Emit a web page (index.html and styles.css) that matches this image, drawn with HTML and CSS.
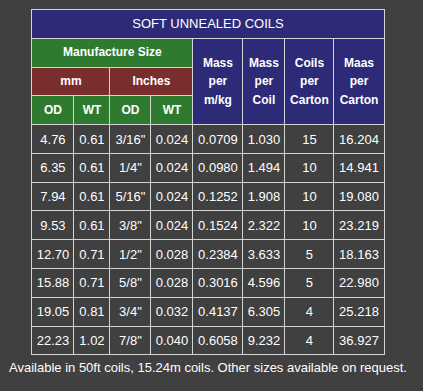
FILE: index.html
```html
<!DOCTYPE html>
<html>
<head>
<meta charset="utf-8">
<link rel="stylesheet" href="styles.css">
</head>
<body>
<div class="wrap">
<table class="coils">
<colgroup>
<col class="c42"><col class="c36"><col class="c41"><col class="c42"><col class="c50"><col class="c42"><col class="c49"><col class="c50">
</colgroup>
<thead>
<tr><th colspan="8" class="title">SOFT UNNEALED COILS</th></tr>
<tr>
<th colspan="4" class="green">Manufacture Size</th>
<th rowspan="3" class="navy"><div class="ml">Mass<br>per<br>m/kg</div></th>
<th rowspan="3" class="navy"><div class="ml">Mass<br>per<br>Coil</div></th>
<th rowspan="3" class="navy"><div class="ml">Coils<br>per<br>Carton</div></th>
<th rowspan="3" class="navy"><div class="ml">Maas<br>per<br>Carton</div></th>
</tr>
<tr><th colspan="2" class="red">mm</th><th colspan="2" class="red">Inches</th></tr>
<tr><th class="green">OD</th><th class="green">WT</th><th class="green">OD</th><th class="green">WT</th></tr>
</thead>
<tbody>
<tr><td>4.76</td><td>0.61</td><td>3/16"</td><td>0.024</td><td>0.0709</td><td>1.030</td><td>15</td><td>16.204</td></tr>
<tr><td>6.35</td><td>0.61</td><td>1/4"</td><td>0.024</td><td>0.0980</td><td>1.494</td><td>10</td><td>14.941</td></tr>
<tr><td>7.94</td><td>0.61</td><td>5/16"</td><td>0.024</td><td>0.1252</td><td>1.908</td><td>10</td><td>19.080</td></tr>
<tr><td>9.53</td><td>0.61</td><td>3/8"</td><td>0.024</td><td>0.1524</td><td>2.322</td><td>10</td><td>23.219</td></tr>
<tr><td>12.70</td><td>0.71</td><td>1/2"</td><td>0.028</td><td>0.2384</td><td>3.633</td><td>5</td><td>18.163</td></tr>
<tr><td>15.88</td><td>0.71</td><td>5/8"</td><td>0.028</td><td>0.3016</td><td>4.596</td><td>5</td><td>22.980</td></tr>
<tr><td>19.05</td><td>0.81</td><td>3/4"</td><td>0.032</td><td>0.4137</td><td>6.305</td><td>4</td><td>25.218</td></tr>
<tr><td>22.23</td><td>1.02</td><td>7/8"</td><td>0.040</td><td>0.6058</td><td>9.232</td><td>4</td><td>36.927</td></tr>
</tbody>
</table>
<p class="note">Available in 50ft coils, 15.24m coils. Other sizes available on request.</p>
</div>
</body>
</html>
```

FILE: styles.css
```css
html, body {
  background: #404040;
}
body {
  margin: 8px;
  font-family: "Liberation Sans", Arial, sans-serif;
  color: #ffffff;
}
.wrap {
  width: 400px;
  padding-top: 1px;
  display: flex;
  flex-direction: column;
  align-items: center;
}
.coils {
  border-collapse: collapse;
  table-layout: fixed;
  width: 353px;
  font-size: 13px;
  line-height: 15px;
}
.c42 { width: 42px; }
.c36 { width: 36px; }
.c41 { width: 41px; }
.c50 { width: 50px; }
.c49 { width: 49px; }
.coils th, .coils td {
  border: 1px solid #d4d4d4;
  padding: 6.4px 0;
  text-align: center;
  vertical-align: middle;
  white-space: nowrap;
}
.coils th {
  font-size: 12px;
  font-weight: bold;
}
.coils th.title {
  font-size: 13px;
  font-weight: normal;
  background: #2d2b78;
}
.green { background: #2e7b30; }
.red { background: #7a2d2d; }
.navy { background: #2d2b78; }
.ml {
  line-height: 18.5px;
}
.note {
  margin: 5px 0 0;
  font-size: 13px;
  line-height: 15px;
  text-align: center;
}
```
